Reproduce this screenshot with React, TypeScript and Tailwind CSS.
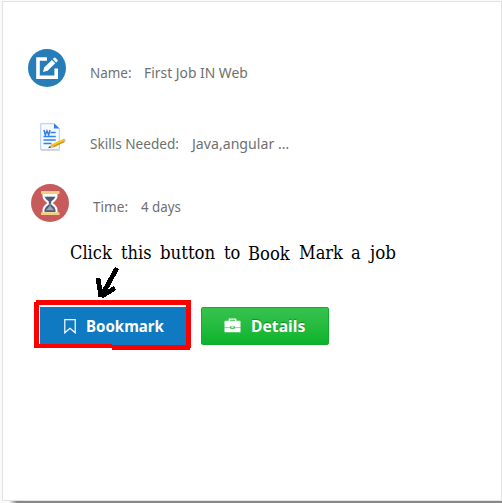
import React from 'react';

function EditIcon() {
  return (
    <svg className="block h-[38px] w-[38px]" viewBox="0 0 38 38">
      <circle cx="19" cy="19" r="19" fill="#267db8" />
      <path d="M19 10H10V28.2H28.2V19.5" fill="none" stroke="#fff" strokeWidth="3.6" />
      <path d="M15 23l1.2-4.6 7.7-7.5 3.4 3.4-7.7 7.5z" fill="#fff" />
      <path d="M24.7 10.1l1.3-1.2q.8-.6 1.6.1l1.8 1.8q.6.8 0 1.5l-1.3 1.3z" fill="#fff" />
    </svg>
  );
}

function DocumentIcon() {
  return (
    <svg className="block h-[28px] w-[26px]" viewBox="0 0 26 28">
      <path d="M1 27.8h19" stroke="#c9cbd1" strokeWidth="1" />
      <path d="M.7.7H14l5.3 5v21H.7z" fill="#f7faff" stroke="#aecbf8" strokeWidth="1" />
      <path d="M14 .3l5.5 5.3H14z" fill="#2f7df0" />
      <path d="M4 7l1.3 5L7 8l1.7 4L10 7" fill="none" stroke="#3979e8" strokeWidth="1.5" />
      <path d="M10.5 9.5h5.2M3.5 13.5h12.3M3.5 17h12.3M3.5 20.5h8" stroke="#2f82f4" strokeWidth="1.4" />
      <path d="M8.5 25l3.2-3.8L23 16l2.3 2.6-11.5 5.6z" fill="#f4c52b" />
      <path d="M12.8 23l11.6-5.2.9 1-11.5 5.4z" fill="#cf9518" />
      <path d="M11.7 21.2l2.1 3L8.5 25z" fill="#dfba84" />
      <path d="M10 23l.8 1.6-2.7.7z" fill="#333" />
      <path d="M22.3 16.3l1.9-.8q1.5.7 1.4 2.6l-1.3.7z" fill="#efb2a6" />
    </svg>
  );
}

function HourglassIcon() {
  return (
    <svg className="block h-[38px] w-[38px]" viewBox="0 0 38 38">
      <circle cx="19" cy="19" r="19" fill="#c75b5b" />
      <path d="M11.5 9h15v3q0 3.5-4.8 7 4.8 3.5 4.8 7v3h-15v-3q0-3.5 4.8-7-4.8-3.5-4.8-7z" fill="#fff" />
      <path d="M13.5 12.5h11q-.6 2.3-4.3 5.1v3q3.8 2.4 4.3 5.2V28h-11v-2.2q.5-2.8 4.3-5.2v-3q-3.7-2.8-4.3-5.1z" fill="#4d5b75" />
      <path d="M14 10h10v2.8H14zM18.7 19h.7v3l3.7 4.2h-8.2l3.8-4.2z" fill="#fff" opacity=".45" />
      <path d="M10 7h18.5v3H10zM10 28.2h18.5v2.9H10z" fill="#f4cc82" />
    </svg>
  );
}

function BookmarkIcon() {
  return (
    <svg className="block h-[15px] w-[12px]" viewBox="0 0 12 15" fill="none" stroke="#fff" strokeWidth="1.2">
      <path d="M.8.7h10.4v13.1L6 9.2.8 13.8z" />
    </svg>
  );
}

function BriefcaseIcon() {
  return (
    <svg className="mb-[2px] block h-[15px] w-[17px]" viewBox="0 0 17 15">
      <path d="M5.3 3V1.1h6.4V3" fill="none" stroke="#fff" strokeWidth="1.3" />
      <path d="M1.3 2.8h14.4q.8 0 .8.8v5.3H10.8V8.3H6.2v.6H.5V3.6q0-.8.8-.8z" fill="#fff" />
      <path d="M.5 9.4h5.7v1.3h4.6V9.4h5.7v4.9H.5z" fill="#fff" />
      <path d="M7.3 8.4h2.4v1.4H7.3z" fill="#fff" />
    </svg>
  );
}

function Annotation() {
  return (
    <svg className="pointer-events-none absolute left-[-3px] top-[-2px] h-[503px] w-[502px]" viewBox="0 0 502 503">
      <path d="M34 302H36V300H191V348H190V350H112V348H34zM39 305V344H112V345H186V305z" fill="#f00" fillRule="evenodd" shapeRendering="crispEdges" />
      <path d="M39 305H186V307H40V344H39z" fill="#fff" shapeRendering="crispEdges" />
      <path d="M117 268L101 297M98 278L101 297M102 296L115 288" fill="none" stroke="#000" strokeWidth="4.8" strokeLinejoin="round" shapeRendering="crispEdges" />
    </svg>
  );
}

export default function App() {
  return (
    <main className="relative h-[503px] w-[502px] overflow-hidden bg-[#fafafa] pl-[2px] pt-px font-['Noto_Sans','Open_Sans',sans-serif]">
      <section className="relative h-[500px] w-[500px] border border-[#e2e2e2] bg-white text-[14px] leading-5 text-[#707070]">
        <div className="flex h-[38px] items-start pl-[25px] mt-[47px]">
          <EditIcon />
          <span className="ml-[24px] mt-[14px] w-[54px] whitespace-nowrap"><span className="inline-block origin-left scale-x-[.96]">Name:</span></span>
          <span className="mt-[14px] inline-block origin-left scale-x-[.99] whitespace-nowrap">First Job IN Web</span>
        </div>
        <div className="mt-[36px] flex h-[28px] items-start pl-[37px]">
          <DocumentIcon />
          <span className="ml-[24px] mt-[11px] w-[102px] whitespace-nowrap"><span className="inline-block origin-left scale-x-[.97]">Skills Needed:</span></span>
          <span className="mt-[11px] inline-block origin-left scale-x-[1.01] whitespace-nowrap">Java,angular …</span>
        </div>
        <div className="mt-[33px] flex h-[38px] items-start pl-[28px]">
          <HourglassIcon />
          <span className="ml-[24px] mt-[13px] w-[48px] whitespace-nowrap"><span className="inline-block origin-left scale-x-[.97]">Time:</span></span>
          <span className="mt-[13px] inline-block origin-left scale-x-[.95] whitespace-nowrap">4 days</span>
        </div>
        <div className="mt-[18px] flex h-[24px] whitespace-nowrap pl-[67px] font-['DejaVu_Serif_Condensed','DejaVu_Serif',serif] text-[19px] font-stretch-condensed leading-6 text-black">
          <span className="w-[51px] shrink-0"><span className="inline-block origin-left scale-x-[.95]">Click</span></span>
          <span className="w-[39px] shrink-0"><span className="inline-block origin-left scale-x-[.95]">this</span></span>
          <span className="w-[64px] shrink-0"><span className="inline-block origin-left scale-x-[.97]">button</span></span>
          <span className="w-[24px] shrink-0"><span className="inline-block origin-left scale-x-[.95]">to</span></span>
          <span className="mt-px w-[51px] shrink-0"><span className="inline-block origin-left scale-x-[.96]">Book</span></span>
          <span className="w-[52px] shrink-0"><span className="inline-block origin-left scale-x-[.95]">Mark</span></span>
          <span className="w-[19px] shrink-0"><span className="inline-block origin-left scale-x-[.95]">a</span></span>
          <span className="shrink-0"><span className="inline-block origin-left scale-x-[.98]">job</span></span>
        </div>
        <div className="mt-[43px] flex gap-[15px] pl-[37px] text-[16px] font-bold text-white">
          <button className="flex h-[38px] w-[146px] items-center bg-[#0f7ac1] pl-[24px]">
            <BookmarkIcon />
            <span className="ml-[10px] inline-block origin-left scale-x-[.94]">Bookmark</span>
          </button>
          <button className="flex h-[38px] w-[128px] items-center rounded-[2px] border border-[#11ac2e] bg-gradient-to-b from-[#36c24f] to-[#07b42b] pl-[22px] [text-shadow:0_-1px_1px_#0b902a]">
            <BriefcaseIcon />
            <span className="ml-[10px] inline-block origin-left scale-x-[.98]">Details</span>
          </button>
        </div>
        <Annotation />
      </section>
      <div className="ml-[7px] h-[2px] bg-gradient-to-r from-[#fafafa] via-[#888] via-[8px] to-[#888]" />
    </main>
  );
}
